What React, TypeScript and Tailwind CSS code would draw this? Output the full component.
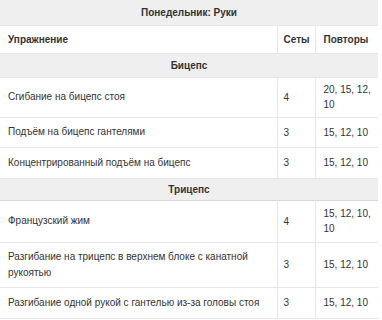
import React from "react";

type Row = { name: string; sets: string; reps: string; h: string };

const biceps: Row[] = [
  { name: "Сгибание на бицепс стоя", sets: "4", reps: "20, 15, 12, 10", h: "h-[40px]" },
  { name: "Подъём на бицепс гантелями", sets: "3", reps: "15, 12, 10", h: "h-[30px]" },
  { name: "Концентрированный подъём на бицепс", sets: "3", reps: "15, 12, 10", h: "h-[31px]" },
];

const triceps: Row[] = [
  { name: "Французский жим", sets: "4", reps: "15, 12, 10, 10", h: "h-[42px]" },
  { name: "Разгибание на трицепс в верхнем блоке с канатной рукоятью", sets: "3", reps: "15, 12, 10", h: "h-[45px]" },
  { name: "Разгибание одной рукой с гантелью из-за головы стоя", sets: "3", reps: "15, 12, 10", h: "h-[31px]" },
];

function ExerciseRow({ row }: { row: Row }) {
  return (
    <tr className={`${row.h} border-b border-[#e6e6e6]`}>
      <td className="pl-2 pr-1 align-middle leading-[16px]">{row.name}</td>
      <td className="px-[6px] align-middle border-l border-[#e6e6e6]">{row.sets}</td>
      <td className="pl-2 pr-1 align-middle leading-[15px] border-l border-[#e6e6e6]">{row.reps}</td>
    </tr>
  );
}

function Section({ title, h, darker }: { title: string; h: string; darker?: boolean }) {
  return (
    <tr className={`${h} bg-[#efefef] border-b ${darker ? "border-[#d6d6d6]" : "border-[#e6e6e6]"}`}>
      <td colSpan={3} className="text-center font-bold align-middle">{title}</td>
    </tr>
  );
}

export default function App() {
  return (
    <div className="w-[382px] h-[320px] bg-white overflow-hidden">
      <table
        className="w-[378px] table-fixed border-collapse text-[10px] text-[#333]"
        style={{ fontFamily: "'Liberation Sans', Arial, sans-serif" }}
      >
        <colgroup>
          <col className="w-[277px]" />
          <col className="w-[38px]" />
          <col className="w-[63px]" />
        </colgroup>
        <tbody>
          <Section title="Понедельник: Руки" h="h-[25px]" />
          <tr className="h-[28px] border-b border-[#e6e6e6] font-bold">
            <td className="px-2 align-middle">Упражнение</td>
            <td className="px-[6px] align-middle border-l border-[#e6e6e6]">Сеты</td>
            <td className="pl-2 align-middle border-l border-[#e6e6e6]">Повторы</td>
          </tr>
          <Section title="Бицепс" h="h-[24px]" />
          {biceps.map((r) => (
            <ExerciseRow key={r.name} row={r} />
          ))}
          <Section title="Трицепс" h="h-[22px]" darker />
          {triceps.map((r) => (
            <ExerciseRow key={r.name} row={r} />
          ))}
        </tbody>
      </table>
    </div>
  );
}
